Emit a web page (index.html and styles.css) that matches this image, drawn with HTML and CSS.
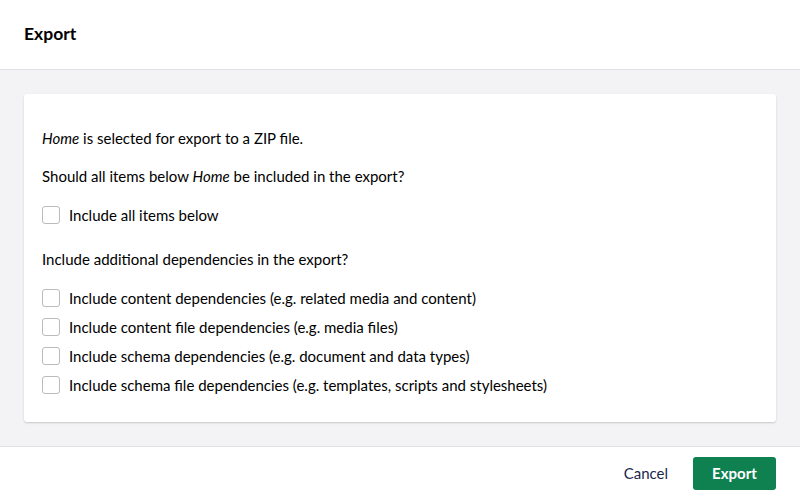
FILE: index.html
```html
<!DOCTYPE html>
<html lang="en">
<head>
<meta charset="utf-8">
<title>Export</title>
<link rel="stylesheet" href="styles.css">
</head>
<body>
<div class="dialog">
  <header class="header">
    <h1 class="title">Export</h1>
  </header>
  <main class="body">
    <section class="card">
      <p class="text"><em>Home</em> is selected for export to a ZIP file.</p>
      <p class="text"><span>Should all items below <em>Home</em> be included in the export?</span></p>
      <label class="check first"><span class="box"></span><span>Include all items below</span></label>
      <p class="text gap-top">Include additional dependencies in the export?</p>
      <div class="checks">
        <label class="check"><span class="box"></span><span>Include content dependencies (e.g. related media and content)</span></label>
        <label class="check"><span class="box"></span><span>Include content file dependencies (e.g. media files)</span></label>
        <label class="check"><span class="box"></span><span>Include schema dependencies (e.g. document and data types)</span></label>
        <label class="check"><span class="box"></span><span>Include schema file dependencies (e.g. templates, scripts and stylesheets)</span></label>
      </div>
    </section>
  </main>
  <footer class="footer">
    <button class="btn-link">Cancel</button>
    <button class="btn-primary">Export</button>
  </footer>
</div>
</body>
</html>
```

FILE: styles.css
```css
* { box-sizing: border-box; }
html, body { margin: 0; padding: 0; }
body {
  font-family: Lato, "Noto Sans", sans-serif;
  font-size: 15px;
  line-height: 20px;
  color: #1b264f;
  background: #fff;
}
.dialog {
  width: 800px;
  height: 500px;
  display: flex;
  flex-direction: column;
}
.header {
  height: 70px;
  border-bottom: 1px solid #e1e1e4;
  display: flex;
  align-items: center;
  padding: 0 24px 2px;
}
.title {
  margin: 0;
  font-size: 17.5px;
  font-weight: 700;
  color: #000;
  letter-spacing: 0;
}
.body {
  height: 376px;
  background: #f3f3f5;
  padding: 24px;
}
.card {
  background: #fff;
  border-radius: 3px;
  box-shadow: 0 1px 2px rgba(0,0,0,0.18);
  height: 328px;
  padding: 34px 18px 26px;
  color: #000;
}
.text { margin: 0 0 18px; }
.text em { font-style: italic; }
.gap-top { margin-top: 23px; }
.check {
  display: flex;
  align-items: center;
  height: 22px;
  gap: 9px;
}
.box {
  width: 18px;
  height: 18px;
  border: 1px solid #bbbabf;
  border-radius: 3px;
  background: #fff;
  flex: none;
}
.checks {
  display: flex;
  flex-direction: column;
  gap: 7px;
}
.footer {
  height: 54px;
  border-top: 1px solid #e1e1e4;
  display: flex;
  justify-content: flex-end;
  align-items: center;
  padding: 0 24px 1px;
  gap: 10px;
}
.btn-link {
  font: inherit;
  color: #1b264f;
  background: none;
  border: 0;
  padding: 0 15px;
  height: 33px;
}
.btn-primary {
  font: inherit;
  font-weight: 700;
  color: #fff;
  background: #0f8050;
  border: 0;
  border-radius: 3px;
  height: 33px;
  width: 83px;
  padding: 0;
}
```
